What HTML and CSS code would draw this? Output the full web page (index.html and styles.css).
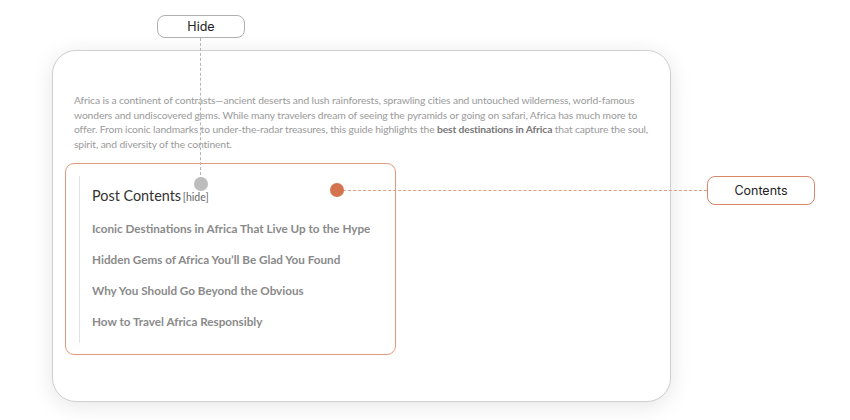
FILE: index.html
```html
<!DOCTYPE html>
<html lang="en">

<head>
    <meta charset="UTF-8">
    <title>Post Contents</title>
    <link rel="stylesheet" href="styles.css">
</head>

<body>
    <div class="stage">

        <div class="card">
            <p class="intro">Africa is a continent of contrasts—ancient deserts and lush rainforests, sprawling cities and untouched wilderness, world-famous wonders and undiscovered gems. While many travelers dream of seeing the pyramids or going on safari, Africa has much more to offer. From iconic landmarks to under-the-radar treasures, this guide highlights the <b>best destinations in Africa</b> that capture the soul, spirit, and diversity of the continent.</p>

            <div class="toc">
                <div class="toc-inner">
                    <div class="toc-title">Post Contents <span class="toc-hide">[hide]</span></div>
                    <ul class="toc-list">
                        <li>Iconic Destinations in Africa That Live Up to the Hype</li>
                        <li>Hidden Gems of Africa You’ll Be Glad You Found</li>
                        <li>Why You Should Go Beyond the Obvious</li>
                        <li>How to Travel Africa Responsibly</li>
                    </ul>
                </div>
            </div>
        </div>

        <!-- callouts -->
        <div class="pill pill-hide">Hide</div>
        <div class="line-hide"></div>
        <div class="dot dot-hide"></div>

        <div class="pill pill-contents">Contents</div>
        <div class="line-contents"></div>
        <div class="dot dot-contents"></div>

    </div>
</body>

</html>
```

FILE: styles.css
```css
body {
    margin: 0;
    background: #fff;
    font-family: Lato, "Open Sans", sans-serif;
}

.stage {
    position: relative;
    width: 850px;
    height: 420px;
    overflow: hidden;
}

.card {
    box-sizing: border-box;
    width: 619px;
    height: 352px;
    margin: 50px 0 0 52px;
    padding: 42px 12px 0 12px;
    border: 1px solid #cfcfcf;
    border-radius: 24px;
    background: #fff;
    box-shadow: 0 4px 22px rgba(0, 0, 0, 0.10);
}

.intro {
    margin: 0;
    padding: 0 3px 0 9px;
    font-size: 10.3px;
    letter-spacing: -0.12px;
    line-height: 14.5px;
    color: #9a9a9a;
}

.intro b {
    font-weight: 700;
    color: #777;
}

.toc {
    box-sizing: border-box;
    width: 331px;
    height: 192px;
    margin-top: 12px;
    padding: 12px 0 11px 13px;
    border: 1px solid #de9a7c;
    border-radius: 9px;
}

.toc-inner {
    height: 100%;
    padding-left: 12px;
    border-left: 1px solid #e2e2e2;
}

.toc-title {
    padding-top: 10px;
    font-size: 14.4px;
    color: #333;
    line-height: 20px;
}

.toc-hide {
    font-size: 10.5px;
    color: #666;
    margin-left: -2px;
}

.toc-list {
    list-style: none;
    margin: 13px 0 0;
    padding: 0;
}

.toc-list li {
    font-size: 11.7px;
    font-weight: 700;
    color: #8a8a8a;
    line-height: 16px;
    margin-bottom: 15px;
}

.pill {
    position: absolute;
    box-sizing: border-box;
    display: flex;
    align-items: center;
    justify-content: center;
    font-family: Inter, "Liberation Sans", sans-serif;
    font-size: 12.5px;
    color: #222;
    background: #fff;
    border-radius: 8px;
}

.pill-hide {
    left: 157px;
    top: 15px;
    width: 88px;
    height: 23px;
    border: 1px solid #b0b0b0;
}

.pill-contents {
    left: 707px;
    top: 176px;
    width: 108px;
    height: 29px;
    border: 1px solid #d9866a;
}

.line-hide {
    position: absolute;
    left: 200px;
    top: 38px;
    height: 142px;
    border-left: 1px dashed #b5b5b5;
}

.line-contents {
    position: absolute;
    left: 343px;
    top: 190px;
    width: 364px;
    border-top: 1px dashed #e0a085;
}

.dot {
    position: absolute;
    width: 14px;
    height: 14px;
    border-radius: 50%;
}

.dot-hide {
    left: 194px;
    top: 177px;
    background: #bdbdbd;
}

.dot-contents {
    left: 330px;
    top: 183px;
    background: #d3744e;
}
```
